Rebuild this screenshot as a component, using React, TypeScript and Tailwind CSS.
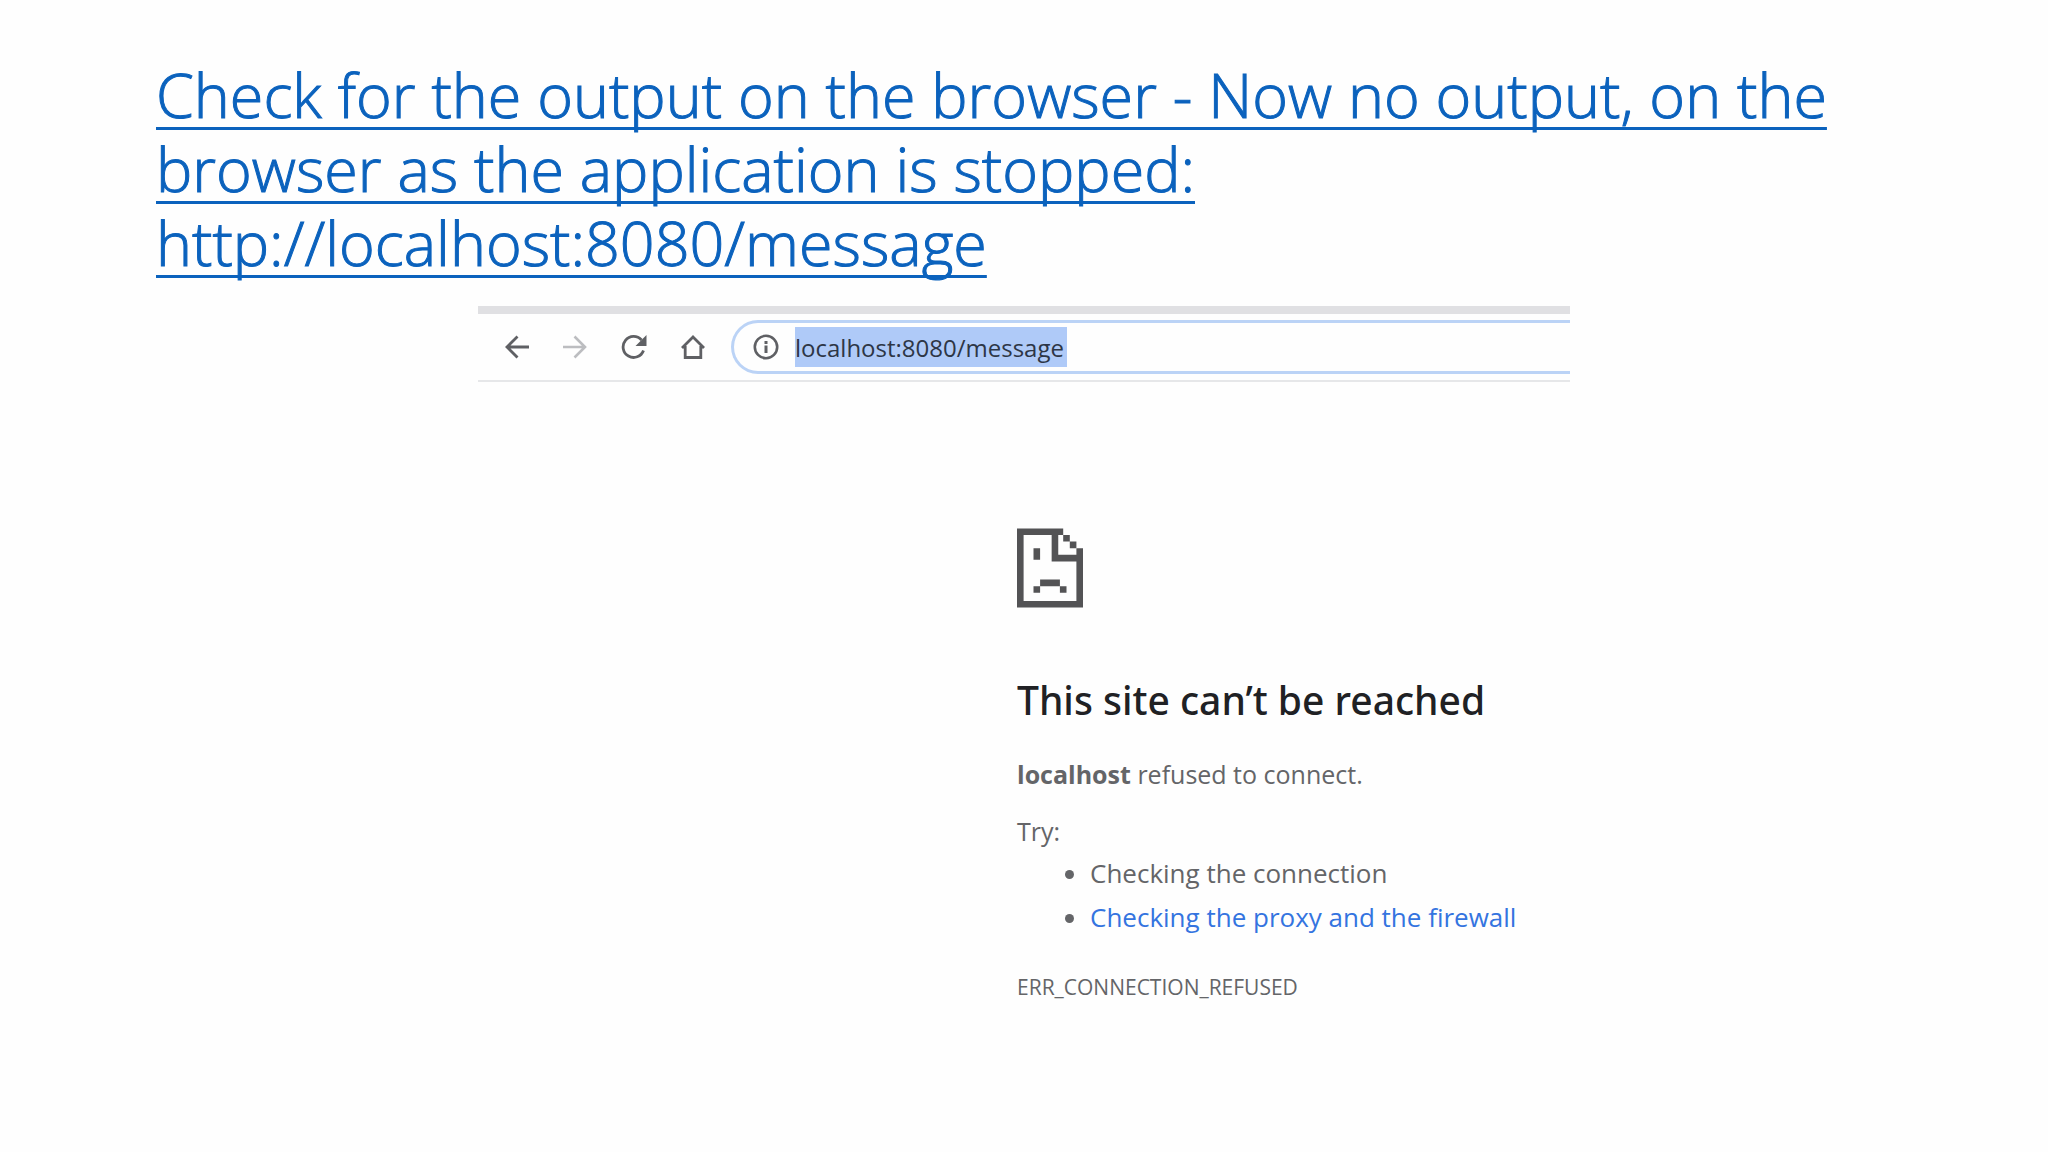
function BackIcon() {
  return (
    <svg viewBox="0 0 24 24" className="size-6" fill="none" stroke="currentColor" strokeWidth="2.8" aria-hidden="true">
      <path d="M24 12H2M12.500 1.500 2 12l10.500 10.500" />
    </svg>
  );
}

function ForwardIcon() {
  return (
    <svg viewBox="0 0 24 24" className="size-6" fill="none" stroke="currentColor" strokeWidth="2.6" aria-hidden="true">
      <path d="M0 12h22M11.500 1.500 22 12 11.500 22.500" />
    </svg>
  );
}

function ReloadIcon() {
  return (
    <svg viewBox="0 0 26 26" className="size-[26px]" fill="none" aria-hidden="true">
      <path d="M22.500 16.500A10.500 10.500 0 1 1 20.500 6" stroke="currentColor" strokeWidth="2.8" />
      <path d="M25.500 1v11h-11z" fill="currentColor" />
    </svg>
  );
}

function HomeIcon() {
  return (
    <svg viewBox="0 0 24 24" className="size-6" fill="none" stroke="currentColor" strokeWidth="2.8" aria-hidden="true">
      <path d="M1 13 12 2l11 11M4.200 11v11.500h15.600V11" />
    </svg>
  );
}

function InfoIcon() {
  return (
    <svg viewBox="0 0 26 26" className="size-[26px] shrink-0 text-[#5f6064]" fill="none" aria-hidden="true">
      <circle cx="13" cy="13" r="11.200" stroke="currentColor" strokeWidth="2.6" />
      <path d="M11.500 11.500h3V19h-3zM11.500 7h3v3h-3z" fill="currentColor" />
    </svg>
  );
}

function SadPageIcon() {
  return (
    <svg viewBox="0 0 40 48" className="h-20 w-[66px]" fill="#535355" aria-hidden="true">
      <path d="M0 0H28V4H25V16H36V12H40V48H0ZM4 4V44H36V20H21V4Z" fillRule="evenodd" />
      <path d="M28 4h4v4h-4zM32 8h4v4h-4zM10 12h4v7h-4zM14 31h12v4H14zM10 35h4v4h-4zM26 35h4v4h-4z" />
    </svg>
  );
}

export default function App() {
  return (
    <main className="min-h-screen bg-[#fefefe] pt-[58px] font-['Open_Sans','Noto_Sans',sans-serif]">
      <h1 className="px-[156px] text-[61px] leading-[74px] font-light text-[#0b62bd] [-webkit-text-stroke:1px_#0b62bd]">
        <a
          href="http://localhost:8080/message"
          className="block underline decoration-[3px] underline-offset-[9px] [text-decoration-skip-ink:none]"
        >
          <span className="block">Check for the output on the browser - Now no output, on the</span>
          <span className="block">browser as the application is stopped:</span>
          <span className="block">http://localhost:8080/message</span>
        </a>
      </h1>

      <section className="mx-auto mt-[26px] max-w-[1092px]" aria-label="Browser">
        <div className="h-2 bg-[#e0e0e3]" />
        <nav className="flex items-center border-b-2 border-[#e6e7e9] pt-[6px] pb-[6px] text-[#5f6064]">
          <div className="flex w-[253px] shrink-0 items-center gap-[34px] pl-[27px]">
            <button type="button" aria-label="Back"><BackIcon /></button>
            <button type="button" aria-label="Forward" className="text-[#bcbdc0]" disabled><ForwardIcon /></button>
            <button type="button" aria-label="Reload"><ReloadIcon /></button>
            <button type="button" aria-label="Home"><HomeIcon /></button>
          </div>
          <div className="flex h-[54px] grow items-center gap-4 rounded-l-full border-y-3 border-l-3 border-[#bbd3f6] pl-[19px]">
            <InfoIcon />
            <input
              type="text"
              aria-label="Address"
              defaultValue="localhost:8080/message"
              className="h-10 w-[272px] bg-[#afcaf8] text-[24px] text-[#2d3646] outline-none"
            />
          </div>
        </nav>

        <div className="pt-[146px] pl-[539px] text-[#646568]">
          <SadPageIcon />
          <h2 className="mt-[65px] font-['Noto_Sans',sans-serif] text-[39px] leading-[54px] font-medium text-[#202124]">
            This site can’t be reached
          </h2>
          <p className="mt-[30px] text-[25px] leading-[34px]">
            <strong>localhost</strong> refused to connect.
          </p>
          <p className="mt-[23px] text-[25px] leading-[34px]">Try:</p>
          <ul className="mt-[3px] list-disc pl-[73px] text-[26px] leading-[44px]">
            <li>Checking the connection</li>
            <li>
              <a href="#proxy" className="text-[#3474e0]">Checking the proxy and the firewall</a>
            </li>
          </ul>
          <p className="mt-[26px] text-[21px] leading-[44px]">ERR_CONNECTION_REFUSED</p>
        </div>
      </section>
    </main>
  );
}
